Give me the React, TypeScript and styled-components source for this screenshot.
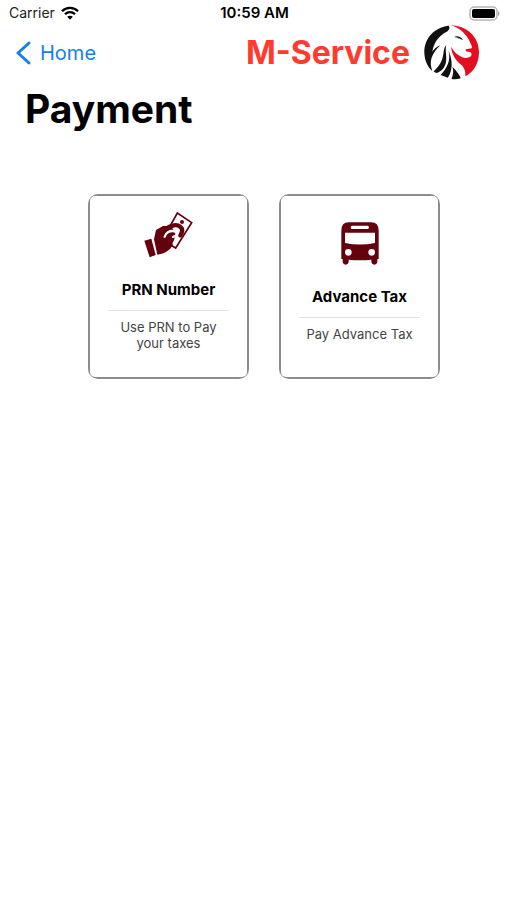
import React from "react";
import styled, { createGlobalStyle } from "styled-components";

const GlobalStyle = createGlobalStyle`
  *, *::before, *::after { box-sizing: border-box; }
  body {
    margin: 0;
    background: #fff;
    color: #000;
    font-family: Inter, "Liberation Sans", sans-serif;
  }
`;

const Screen = styled.div`
  min-height: 100vh;
  background: #fff;
`;

const StatusBar = styled.div`
  display: grid;
  grid-template-columns: 1fr auto 1fr;
  align-items: center;
  height: 26px;
  padding: 0 7px 0 9px;
  font-size: 14px;
  line-height: 20px;
`;

const Carrier = styled.div`
  display: flex;
  align-items: center;
  gap: 6px;
  color: #222;
`;

const Clock = styled.time`
  font-size: 15px;
  font-weight: 600;
`;

const BatterySlot = styled.div`
  display: flex;
  justify-content: flex-end;
`;

const NavBar = styled.nav`
  display: flex;
  align-items: center;
  justify-content: space-between;
  height: 53px;
  padding: 0 28px 0 16px;
`;

const BackLink = styled.a`
  display: flex;
  align-items: center;
  gap: 9px;
  color: #1380f0;
  font-size: 20px;
  line-height: 24px;
  text-decoration: none;
`;

const Brand = styled.div`
  display: flex;
  align-items: center;
  gap: 14px;
`;

const BrandName = styled.span`
  color: #ff3b30;
  font-size: 32px;
  font-weight: 700;
  line-height: 42px;
`;

const Title = styled.h1`
  margin: 0;
  padding: 5px 25px 4px;
  font-size: 39px;
  font-weight: 700;
  line-height: 50px;
`;

const Cards = styled.main`
  display: grid;
  grid-template-columns: 1fr 1fr;
  gap: 30px;
  padding: 56px 67px 0 88px;
`;

const CardFrame = styled.button`
  display: flex;
  height: 185px;
  padding: 2px;
  border: 0;
  border-radius: 10px;
  background: #8c8c8c;
  color: inherit;
  font-family: inherit;
  cursor: pointer;
`;

const CardBody = styled.span`
  display: flex;
  flex: 1;
  flex-direction: column;
  align-items: center;
  justify-content: center;
  align-self: stretch;
  padding: 0 18px 10px;
  border-radius: 5px;
  background: #fff;
`;

const CardTitle = styled.span`
  margin-top: 22px;
  font-size: 15px;
  font-weight: 700;
  line-height: 20px;
`;

const Divider = styled.span`
  align-self: stretch;
  height: 1px;
  margin: 10px 0 8px;
  background: #e2e2e2;
`;

const CardText = styled.span`
  color: #444;
  font-size: 13px;
  line-height: 16px;
  text-align: center;
`;

const WifiIcon = () => (
  <svg width="18" height="14" viewBox="0 0 18 14" fill="none" aria-hidden="true">
    <path d="M1 5.2C5.4.7 12.600.7 17 5.200M4 8.300C6.800 5.500 11.200 5.500 14 8.300" stroke="#000" strokeWidth="2.300" />
    <path d="M9 13.700 6.200 10.800C7.700 9.400 10.300 9.400 11.800 10.800Z" fill="#000" />
  </svg>
);

const BatteryIcon = () => (
  <svg width="31" height="15" viewBox="0 0 31 15" aria-hidden="true">
    <rect x="1" y="1" width="27" height="13" rx="4" fill="#fff" stroke="#b5b5b5" strokeWidth="1.500" />
    <rect x="3" y="3" width="23" height="9" rx="2" fill="#000" />
    <path d="M29 5c2 .8 2 4.200 0 5Z" fill="#aaa" />
  </svg>
);

const BackIcon = () => (
  <svg width="15" height="24" viewBox="0 0 15 24" fill="none" aria-hidden="true">
    <path d="M13 2 2 12l11 10" stroke="currentColor" strokeWidth="3" strokeLinecap="round" strokeLinejoin="round" />
  </svg>
);

const LionLogo = () => (
  <svg width="55" height="55" viewBox="11 13 166 166" role="img" aria-label="Lion logo">
    <path
      fill="#111"
      d="M86 15C44 19 11 52 12 97c1 23 9 42 24 55-5-15-6-28-2-40 6-17 15-28 27-38-13 5-19 11-25 19 6-29 19-47 46-61 5-5 8-11 4-17Z"
    />
    <path fill="#111" d="M78 73c-9 11-7 24-10 35-4 18-12 29-28 45l8 5c16-5 25-15 29-32 4-19-3-34 1-53Z" />
    <path fill="#111" d="M85 91c7 29-3 51-24 73l22 8c14-20 16-51 2-81Z" />
    <path fill="#111" d="M97 140c4 11 2 25-3 36 10 2 19 1 28-2-4-11-13-23-25-34Z" />
    <path
      fill="#e30f20"
      d="M90 14c50 0 87 35 87 81 0 33-16 59-41 73 0-17-3-25-12-34-17-14-29-29-31-55 10 18 22 28 38 33 10 2 19-1 22-6 3-4 1-8-1-11l-15-3v-6l18-3c2-3-1-10-4-15-3-10-9-18-15-25-11-15-28-25-46-29Z"
    />
    <path fill="#111" d="M102 49c9-5 21-1 27 9-9-3-16-7-27-9Z" />
    <path fill="#45a59a" d="M109 51c6 0 10 2 14 5-6 0-10-2-14-5Z" />
  </svg>
);

const HandMoneyIcon = () => (
  <svg width="50" height="46" viewBox="26 24 150 138" aria-hidden="true">
    <path fill="#fff" stroke="#65000d" strokeWidth="5" d="m126 27 43 29-48 76-40-24Z" />
    <circle cx="140" cy="54" r="6" fill="#65000d" />
    <path fill="#65000d" d="M56 106 62 78 83 66h24l14 22-5 26c-8 22-23 34-50 38Z" />
    <path fill="none" stroke="#65000d" strokeWidth="13" strokeLinecap="round" d="M92 74c16-12 34-13 42-6 10 6 7 17 1 26" />
    <path fill="none" stroke="#fff" strokeWidth="7" strokeLinecap="round" strokeLinejoin="round" d="M88 98c3-12 15-18 25-17 10 1 13 8 9 14l-9 4M124 93c-1 11-3 17-9 25" />
    <path fill="#65000d" d="m27 110 21-6 13 49-18 7Z" />
  </svg>
);

const BusIcon = () => (
  <svg width="38" height="43" viewBox="31 23 114 129" aria-hidden="true">
    <path
      fill="#65000d"
      fillRule="evenodd"
      d="M54 24h67q23 0 23 25v85h-4v10q-2 7-9 7t-9-7v-8q-34 4-68 0v8q-2 7-9 7t-9-7v-10h-4V49q0-25 22-25ZM64 34q-4 0-4 5t4 5h47q4 0 4-5t-4-5ZM43 55v31q45 9 90 0V55ZM53 104a10 10 0 1 0 0 20 10 10 0 0 0 0-20Zm70 0a10 10 0 1 0 0 20 10 10 0 0 0 0-20Z"
    />
  </svg>
);

const services = [
  { title: "PRN Number", text: "Use PRN to Pay your taxes", Icon: HandMoneyIcon },
  { title: "Advance Tax", text: "Pay Advance Tax", Icon: BusIcon },
];

export default function App() {
  return (
    <Screen>
      <GlobalStyle />
      <StatusBar>
        <Carrier>
          Carrier
          <WifiIcon />
        </Carrier>
        <Clock>10:59 AM</Clock>
        <BatterySlot>
          <BatteryIcon />
        </BatterySlot>
      </StatusBar>
      <NavBar>
        <BackLink href="#home">
          <BackIcon />
          Home
        </BackLink>
        <Brand>
          <BrandName>M-Service</BrandName>
          <LionLogo />
        </Brand>
      </NavBar>
      <Title>Payment</Title>
      <Cards>
        {services.map(({ title, text, Icon }) => (
          <CardFrame key={title} type="button">
            <CardBody>
              <Icon />
              <CardTitle>{title}</CardTitle>
              <Divider />
              <CardText>{text}</CardText>
            </CardBody>
          </CardFrame>
        ))}
      </Cards>
    </Screen>
  );
}
